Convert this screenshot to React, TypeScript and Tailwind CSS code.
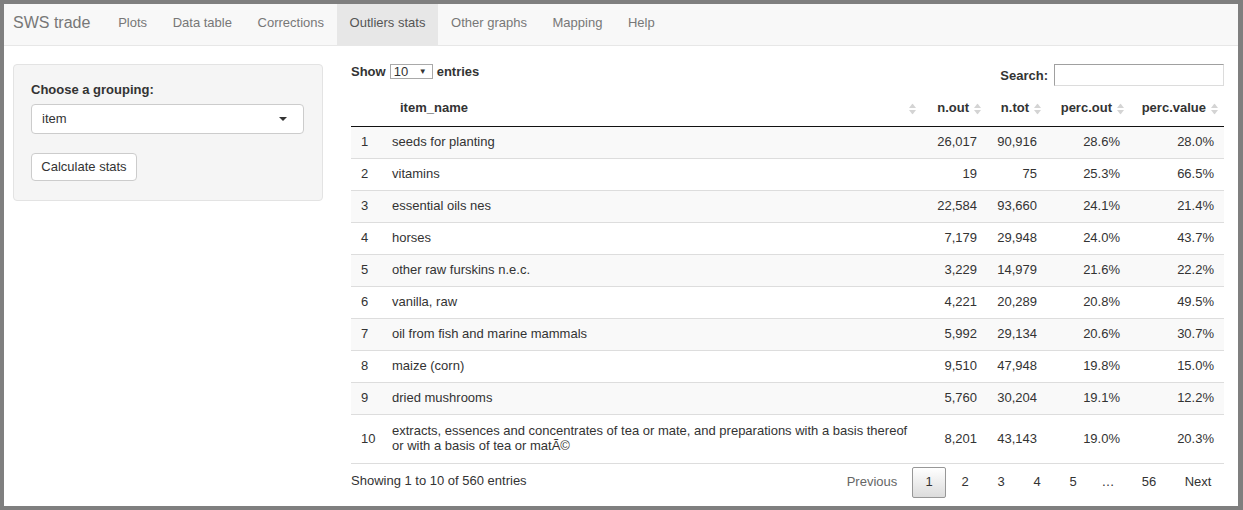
import React from 'react'

type Row = {
  idx: number
  name: React.ReactNode
  nOut: string
  nTot: string
  percOut: string
  percValue: string
}

const NAV_LINKS = ['Plots', 'Data table', 'Corrections', 'Outliers stats', 'Other graphs', 'Mapping', 'Help']

const ROWS: Row[] = [
  { idx: 1, name: 'seeds for planting', nOut: '26,017', nTot: '90,916', percOut: '28.6%', percValue: '28.0%' },
  { idx: 2, name: 'vitamins', nOut: '19', nTot: '75', percOut: '25.3%', percValue: '66.5%' },
  { idx: 3, name: 'essential oils nes', nOut: '22,584', nTot: '93,660', percOut: '24.1%', percValue: '21.4%' },
  { idx: 4, name: 'horses', nOut: '7,179', nTot: '29,948', percOut: '24.0%', percValue: '43.7%' },
  { idx: 5, name: 'other raw furskins n.e.c.', nOut: '3,229', nTot: '14,979', percOut: '21.6%', percValue: '22.2%' },
  { idx: 6, name: 'vanilla, raw', nOut: '4,221', nTot: '20,289', percOut: '20.8%', percValue: '49.5%' },
  { idx: 7, name: 'oil from fish and marine mammals', nOut: '5,992', nTot: '29,134', percOut: '20.6%', percValue: '30.7%' },
  { idx: 8, name: 'maize (corn)', nOut: '9,510', nTot: '47,948', percOut: '19.8%', percValue: '15.0%' },
  { idx: 9, name: 'dried mushrooms', nOut: '5,760', nTot: '30,204', percOut: '19.1%', percValue: '12.2%' },
  {
    idx: 10,
    name: (
      <>
        extracts, essences and concentrates of tea or mate, and preparations with a basis thereof
        <br />
        or with a basis of tea or matÃ©
      </>
    ),
    nOut: '8,201',
    nTot: '43,143',
    percOut: '19.0%',
    percValue: '20.3%'
  }
]

function SortIcon() {
  return (
    <svg
      className="absolute right-[6px] top-1/2 -translate-y-1/2"
      width="7"
      height="11"
      viewBox="0 0 7 11"
    >
      <polygon points="0,4.5 3.5,0 7,4.5" fill="#d4d4d4" />
      <polygon points="0,6.5 7,6.5 3.5,11" fill="#d4d4d4" />
    </svg>
  )
}

export default function App() {
  return (
    <div className="h-[510px] w-[1243px] bg-[#7f7f7f] pt-[4px] pl-[4px] pr-[5px] pb-[4px] font-['Liberation_Sans',Arial,sans-serif] text-[#333]">
      <div className="h-full w-full overflow-hidden bg-white">
        {/* Navbar */}
        <nav className="flex h-[42px] items-stretch border-b border-[#e7e7e7] bg-[#f8f8f8]">
          <div className="flex items-center pb-[3px] pl-[9px] pr-[15px] text-[16px] text-[#777]">SWS trade</div>
          {NAV_LINKS.map((link) => (
            <div
              key={link}
              className={`flex items-center px-[12.8px] pb-[3px] text-[13px] ${
                link === 'Outliers stats' ? 'bg-[#e7e7e7] text-[#555]' : 'text-[#777]'
              }`}
            >
              {link}
            </div>
          ))}
        </nav>

        <div className="flex">
          {/* Sidebar */}
          <div className="ml-[9px] mt-[18px] h-[137px] w-[310px] rounded border border-[#e3e3e3] bg-[#f5f5f5] pt-[17px] pl-[17px] pr-[18px] pb-[19px]">
            <div className="text-[13px] font-bold leading-[15px]">Choose a grouping:</div>
            <div className="mt-[7px] flex h-[30px] items-center justify-between rounded border border-[#ccc] bg-white pl-[10px] pr-[16px] text-[13px]">
              <span>item</span>
              <span className="h-0 w-0 border-x-[4px] border-t-[4px] border-x-transparent border-t-[#333]" />
            </div>
            <div className="mt-[19px] flex h-[28px] w-[106px] items-center justify-center rounded border border-[#ccc] bg-white text-[13px]">
              Calculate stats
            </div>
          </div>

          {/* Main table */}
          <div className="ml-[28px] mt-[18px] w-[873px] text-[13px]">
            <div className="flex h-[22px] items-start justify-between">
              <div className="flex h-[15px] items-center font-bold">
                <span>Show</span>
                <div className="mx-[4px] flex h-[15px] w-[43px] items-center justify-between border border-[#a9a9a9] bg-white pl-[3px] pr-[5px] font-normal">
                  <span className="leading-none">10</span>
                  <span className="text-[8px] leading-none">▼</span>
                </div>
                <span>entries</span>
              </div>
              <div className="flex h-[22px] items-center">
                <span className="pt-[2px] font-bold">Search:</span>
                <div className="ml-[6px] h-[22px] w-[170px] border border-t-[#a0a0a0] border-l-[#a0a0a0] border-r-[#dcdcdc] border-b-[#dcdcdc] bg-white" />
              </div>
            </div>

            <table className="mt-[5px] w-full table-fixed border-separate border-spacing-0 leading-[15px]">
              <colgroup>
                <col className="w-[31px]" />
                <col className="w-[540px]" />
                <col className="w-[65px]" />
                <col className="w-[60px]" />
                <col className="w-[83px]" />
                <col className="w-[94px]" />
              </colgroup>
              <thead>
                <tr>
                  <th className="border-b border-[#111] pt-[9px] pb-[11px]" />
                  <th className="relative border-b border-[#111] pt-[9px] pb-[11px] pl-[18px] pr-[18px] text-left font-bold">
                    item_name
                    <SortIcon />
                  </th>
                  {['n.out', 'n.tot', 'perc.out', 'perc.value'].map((h) => (
                    <th
                      key={h}
                      className="relative whitespace-nowrap border-b border-[#111] pt-[9px] pb-[11px] pl-[2px] pr-[18px] text-right font-bold"
                    >
                      {h}
                      <SortIcon />
                    </th>
                  ))}
                </tr>
              </thead>
              <tbody>
                {ROWS.map((row, i) => {
                  const isLast = i === ROWS.length - 1
                  const cell = `px-[10px] align-middle ${
                    isLast ? 'pt-[8px] pb-[10px] border-b border-[#111]' : 'pt-[7px] pb-[9px]'
                  } ${i > 0 ? 'border-t border-[#ddd]' : ''}`
                  return (
                    <tr key={row.idx} className={i % 2 === 0 ? 'bg-[#f9f9f9]' : 'bg-white'}>
                      <td className={cell}>{row.idx}</td>
                      <td className={cell}>{row.name}</td>
                      <td className={`${cell} text-right`}>{row.nOut}</td>
                      <td className={`${cell} text-right`}>{row.nTot}</td>
                      <td className={`${cell} text-right`}>{row.percOut}</td>
                      <td className={`${cell} text-right`}>{row.percValue}</td>
                    </tr>
                  )
                })}
              </tbody>
            </table>

            {/* Footer */}
            <div className="flex items-start justify-between">
              <div className="pt-[9px] leading-[15px]">Showing 1 to 10 of 560 entries</div>
              <div className="flex pt-[3px]">
                <div className="flex h-[31px] w-[76px] items-center justify-center pb-[2px] text-[#666]">Previous</div>
                <div className="ml-[2px] flex h-[31px] w-[34px] items-center justify-center rounded-[2px] border border-[#979797] bg-gradient-to-b from-white to-[#dcdcdc] pb-[2px]">
                  1
                </div>
                {['2', '3', '4', '5'].map((p) => (
                  <div key={p} className="ml-[2px] flex h-[31px] w-[34px] items-center justify-center pb-[2px]">
                    {p}
                  </div>
                ))}
                <div className="flex h-[31px] w-[36px] items-center justify-center pb-[2px]">…</div>
                <div className="ml-[2px] flex h-[31px] w-[42px] items-center justify-center pb-[2px]">56</div>
                <div className="ml-[2px] flex h-[31px] w-[52px] items-center justify-center pb-[2px]">Next</div>
              </div>
            </div>
          </div>
        </div>
      </div>
    </div>
  )
}
